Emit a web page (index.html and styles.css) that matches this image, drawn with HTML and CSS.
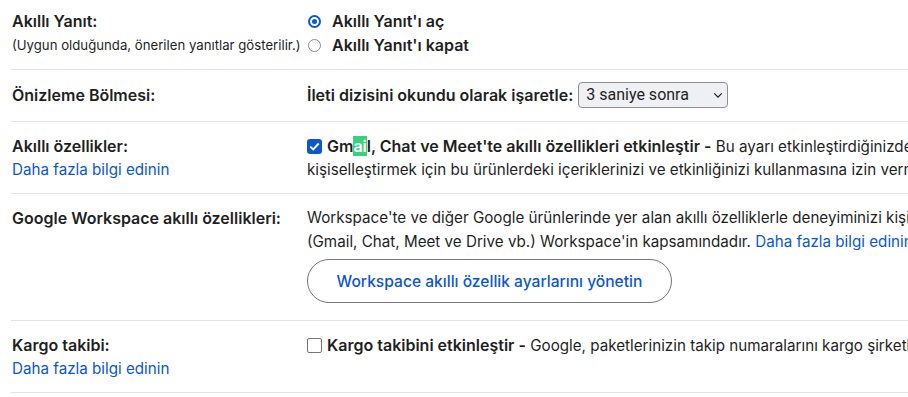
FILE: index.html
```html
<!DOCTYPE html>
<html lang="tr">
<head>
<meta charset="utf-8">
<link rel="stylesheet" href="styles.css">
</head>
<body>
<div class="settings">
  <div class="row row-first">
    <div class="label">
      <div class="title">Akıllı Yanıt:</div>
      <div class="sub">(Uygun olduğunda, önerilen yanıtlar gösterilir.)</div>
    </div>
    <div class="value">
      <div class="opt"><span class="radio on"></span><span class="strong">Akıllı Yanıt'ı aç</span></div>
      <div class="opt"><span class="radio"></span><span class="strong">Akıllı Yanıt'ı kapat</span></div>
    </div>
  </div>
  <div class="row row-mid">
    <div class="label"><div class="title">Önizleme Bölmesi:</div></div>
    <div class="value inline">
      <span class="strong">İleti dizisini okundu olarak işaretle:</span>
      <span class="select">3 saniye sonra
        <svg class="chev" viewBox="0 0 12 8" width="10" height="7"><path d="M1.5 1.5 L6 6 L10.5 1.5" fill="none" stroke="#1f1f1f" stroke-width="1.5"/></svg>
      </span>
    </div>
  </div>
  <div class="row">
    <div class="label">
      <div class="title">Akıllı özellikler:</div>
      <a class="link">Daha fazla bilgi edinin</a>
    </div>
    <div class="value">
      <div class="line"><span class="check on"><svg viewBox="0 0 16 16" width="15" height="15"><path d="M3.5 8.2 L6.6 11.2 L12.5 4.8" fill="none" stroke="#fff" stroke-width="2"/></svg></span><span class="strong">Gm<span class="hl">ai</span>l, Chat ve Meet'te akıllı özellikleri etkinleştir -</span> Bu ayarı etkinleştirdiğinizde Gmail, Chat ve Meet'in deneyiminizi</div>
      <div class="line">kişiselleştirmek için bu ürünlerdeki içeriklerinizi ve etkinliğinizi kullanmasına izin vermiş olursunuz.</div>
    </div>
  </div>
  <div class="row">
    <div class="label"><div class="title">Google Workspace akıllı özellikleri:</div></div>
    <div class="value">
      <div class="line">Workspace'te ve diğer Google ürünlerinde yer alan akıllı özelliklerle deneyiminizi kişiselleştirin.</div>
      <div class="line">(Gmail, Chat, Meet ve Drive vb.) Workspace'in kapsamındadır. <a class="link">Daha fazla bilgi edinin</a></div>
      <button class="pill">Workspace akıllı özellik ayarlarını yönetin</button>
    </div>
  </div>
  <div class="row">
    <div class="label">
      <div class="title">Kargo takibi:</div>
      <a class="link">Daha fazla bilgi edinin</a>
    </div>
    <div class="value">
      <div class="line"><span class="check"></span><span class="strong">Kargo takibini etkinleştir -</span> Google, paketlerinizin takip numaralarını kargo şirketleriyle paylaşabilir.</div>
    </div>
  </div>
</div>
</body>
</html>
```
FILE: styles.css
```css
html, body {
  margin: 0;
  padding: 0;
  overflow: hidden;
  background: #fff;
}
body {
  font-family: Inter, "Open Sans", sans-serif;
  font-size: 15.2px;
  color: #1f1f1f;
  line-height: 24px;
}
.settings {
  margin-top: -3px;
  padding-left: 11px;
}
.row {
  display: grid;
  grid-template-columns: 295px max-content;
  padding: 12px 0 11px 1px;
  border-bottom: 1px solid #e3e3e3;
  width: 1400px;
}
.row-first {
  padding-bottom: 12px;
}
.row-mid {
  padding: 12px 0 13px 1px;
  align-items: center;
}
.title, .strong {
  font-weight: 600;
  font-size: 16px;
  color: #1f1f1f;
}
.sub {
  font-size: 13.2px;
}
.link {
  color: #0b57d0;
  cursor: pointer;
}
.value {
  white-space: nowrap;
}
.inline {
  display: flex;
  align-items: center;
  gap: 5px;
}
.opt {
  display: flex;
  align-items: center;
  height: 24px;
}
.line {
  height: 24px;
}
.opt .strong { margin-left: 11px; }
.radio {
  width: 13px;
  height: 13px;
  margin-left: 1px;
  border: 1px solid #8a8a8a;
  border-radius: 50%;
  box-sizing: border-box;
  display: inline-block;
  position: relative;
}
.radio.on {
  border: 2px solid #0b57d0;
}
.radio.on::after {
  content: "";
  position: absolute;
  left: 2px;
  top: 2px;
  width: 5px;
  height: 5px;
  border-radius: 50%;
  background: #0b57d0;
}
.select {
  display: inline-flex;
  align-items: center;
  justify-content: space-between;
  width: 150px;
  height: 26px;
  box-sizing: border-box;
  padding: 0 4px 0 7px;
  border: 1px solid #8e8e8e;
  border-radius: 4px;
  background: #eef0f4;
  font-family: Roboto, sans-serif;
  font-size: 16px;
}
.check {
  width: 15px;
  height: 15px;
  box-sizing: border-box;
  border: 1.5px solid #767676;
  border-radius: 2px;
  margin-right: 5px;
  display: inline-block;
  vertical-align: -2px;
}
.check svg { display: block; }
.check.on {
  border: none;
  background: #0b57d0;
  border-radius: 3px;
}
.hl {
  background: #3ad17b;
  color: #fff;
}
.pill {
  display: block;
  margin: 5px 0 6px;
  width: 365px;
  height: 44px;
  border: 1px solid #747775;
  border-radius: 22px;
  background: #fff;
  color: #0b57d0;
  font-family: Inter, "Open Sans", sans-serif;
  font-size: 15.6px;
  font-weight: 500;
}
```
